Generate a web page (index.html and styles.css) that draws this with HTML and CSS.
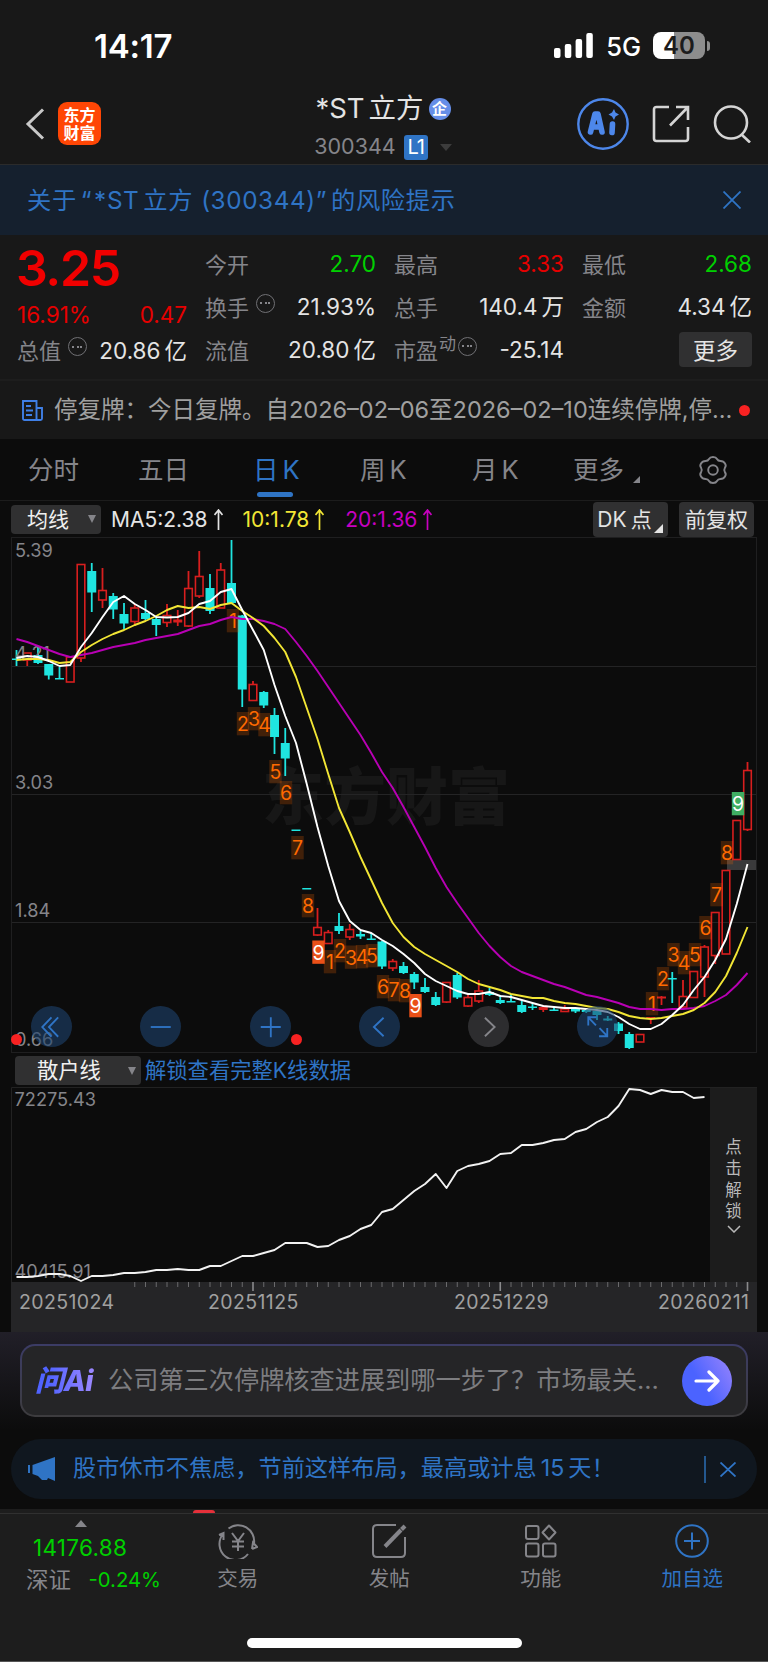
FILE: index.html
```html
<!DOCTYPE html>
<html lang="zh-CN">
<head>
    <meta charset="UTF-8">
    <meta name="viewport" content="width=device-width, initial-scale=1.0">
    <title>*ST立方 300344</title>
    <link rel="stylesheet" href="styles.css">
</head>
<body>

<div class="status-bar">
    <span class="time">14:17</span>
    <div class="status-right">
        <svg class="signal" width="39" height="26" viewBox="0 0 39 26" fill="#fff">
            <rect x="0" y="15" width="6.5" height="10" rx="2"/>
            <rect x="10.8" y="11" width="6.5" height="14" rx="2"/>
            <rect x="21.6" y="6" width="6.5" height="19" rx="2"/>
            <rect x="32.3" y="0" width="6.5" height="25" rx="2"/>
        </svg>
        <span class="network">5G</span>
        <div class="battery">40</div>
        <div class="battery-tip"></div>
    </div>
</div>

<header>
    <div class="header-left">
        <svg width="20" height="32" viewBox="0 0 20 32" fill="none" stroke="#c8c8c8" stroke-width="3"><path d="M18 1.5 3 16l15 14.5"/></svg>
        <div class="app-logo"><span>东方</span><span>财富</span></div>
    </div>
    <div class="stock-title">
        <div class="stock-name"><span>*ST<i></i>立方</span><b>企</b></div>
        <div class="stock-code"><span>300344</span><b>L1</b><i class="arrow"></i></div>
    </div>
    <div class="header-right">
        <svg width="52" height="52" viewBox="0 0 52 52">
            <circle cx="26" cy="26" r="24.7" fill="none" stroke="#4d87ea" stroke-width="2.4"/>
            <g stroke="#4d87ea" stroke-width="5.6" fill="none" stroke-linecap="round" stroke-linejoin="round">
                <path d="M13.500 34 18 16h3l4 18M17 29h6"/>
                <path d="M35.500 26l-.5 8.500"/>
            </g>
            <path d="M37 11l1.500 3.500 3.500 2-3.500 2-1.500 3.500-2-3.500-3.500-2 3.500-2z" fill="#4d87ea"/>
        </svg>
        <svg width="38" height="38" viewBox="0 0 38 38" fill="none" stroke="#d4d4d4" stroke-width="2.6">
            <path d="M17 2H4.500Q2 2 2 4.500v29Q2 36 4.500 36h29q2.500 0 2.500-2.500V22M24 2h12v13M36 2 18 20.500"/>
        </svg>
        <svg width="38" height="38" viewBox="0 0 38 38" fill="none" stroke="#d4d4d4" stroke-width="2.6">
            <circle cx="18" cy="17.500" r="16"/><path d="M28.500 29.500 37 37.500"/>
        </svg>
    </div>
</header>

<div class="risk-bar">
    <span>关于<em>“</em>*ST<i></i>立方<i></i><i></i>(300344)<em class="end">”</em><i></i>的风险提示</span>
    <svg width="18" height="18" viewBox="0 0 18 18" stroke="#2f74c5" stroke-width="1.8"><path d="M.5.5l17 17M17.500.5l-17 17"/></svg>
</div>

<section class="quote">
    <div class="quote-main">
        <div class="price">3.25</div>
        <div class="change"><span>16.91%</span><span>0.47</span></div>
        <div class="item total"><label>总值<u></u></label><span>20.86<i></i>亿</span></div>
    </div>
    <div class="quote-grid">
        <div class="item"><label>今开</label><span class="green">2.70</span></div>
        <div class="item"><label>最高</label><span class="red">3.33</span></div>
        <div class="item"><label>最低</label><span class="green">2.68</span></div>
        <div class="item"><label>换手<u></u></label><span>21.93%</span></div>
        <div class="item"><label>总手</label><span>140.4<i></i>万</span></div>
        <div class="item"><label>金额</label><span>4.34<i></i>亿</span></div>
        <div class="item"><label>流值</label><span>20.80<i></i>亿</span></div>
        <div class="item"><label>市盈<sup>动</sup><u class="tight"></u></label><span>-25.14</span></div>
        <div class="item item-more"><button class="more-button">更多</button></div>
    </div>
</section>

<div class="notice">
    <svg width="21" height="21" viewBox="0 0 21 21" fill="none" stroke="#3f7fe6" stroke-width="1.900">
        <path d="M1 1h13.500v19H2.500Q1 20 1 18.500zM14.500 8H20v10.500Q20 20 18.500 20h-4M4 6h5M4 10.500h7M4 15h6"/>
    </svg>
    <span class="notice-text">停复牌：今日复牌。自2026–02–06至2026–02–10连续停牌,停…</span>
    <i class="dot"></i>
</div>

<nav class="period-tabs">
    <a class="p1">分时</a>
    <a class="p2">五日</a>
    <a class="p3 active">日<i></i>K</a>
    <a class="p4">周<i></i>K</a>
    <a class="p5">月<i></i>K</a>
    <a class="p6">更多<b class="corner"></b></a>
    <svg width="30" height="28" viewBox="0 0 30 28" fill="none" stroke="#85858a" stroke-width="1.900" stroke-linejoin="round">
        <path d="M11 3Q12 1 15 1t4 2q1 2 3.500 2 3 0 4.500 2.500 1.500 2.500 0 4-1.500 2.500 0 5 1.500 1.500 0 4Q25.500 23 22.500 23 20 23 19 25q-1 2-4 2t-4-2Q10 23 7.500 23 4.500 23 3 20.500q-1.500-2.500 0-4 1.500-2.500 0-5-1.500-1.500 0-4Q4.500 5 7.500 5 10 5 11 3z"/>
        <circle cx="15" cy="14" r="4.800"/>
    </svg>
</nav>

<div class="ma-row">
    <div class="select ma-select">均线<i class="arrow"></i></div>
    <span class="ma ma5">MA5:2.38<svg width="9" height="21" viewBox="0 0 9 21"><path d="M4.500 21V1M.5 6l4-5 4 5"/></svg></span>
    <span class="ma ma10">10:1.78<svg width="9" height="21" viewBox="0 0 9 21"><path d="M4.500 21V1M.5 6l4-5 4 5"/></svg></span>
    <span class="ma ma20">20:1.36<svg width="9" height="21" viewBox="0 0 9 21"><path d="M4.500 21V1M.5 6l4-5 4 5"/></svg></span>
    <div class="chip dk">DK<i></i>点<b class="corner"></b></div>
    <div class="chip">前复权</div>
</div>

<div class="kline">
    <svg id="kline" width="768" height="518" viewBox="0 536 768 518"></svg>
    <div class="chart-buttons">
        <button><svg viewBox="0 0 40 40"><path d="M20 11 11 20.500 20 30M26.500 11l-9 9.500 9 9.500"/></svg></button>
        <button><svg viewBox="0 0 40 40"><path d="M10.500 20.500h19.500"/></svg></button>
        <button><svg viewBox="0 0 40 40"><path d="M10.500 20.500h19.500M20.300 11v19.500"/></svg></button>
        <button><svg viewBox="0 0 40 40"><path d="M24 11.500 14.500 20.500 24 29.500"/></svg></button>
        <button class="disabled"><svg viewBox="0 0 40 40"><path d="M16.500 11.500 26 20.500 16.500 29.500"/></svg></button>
        <button><svg viewBox="0 0 40 40"><path d="M11 19v-8h8M11 11l7.500 8M29.500 21.500v8h-8M29.500 29.500l-7.500-8"/></svg></button>
    </div>
    <i class="dot dot-left"></i>
    <i class="dot dot-plus"></i>
</div>

<div class="sub-row">
    <div class="select sub-select">散户线<i class="arrow"></i></div>
    <a>解锁查看完整K线数据</a>
</div>

<div class="retail">
    <svg id="retail" width="699" height="195" viewBox="11 1087 699 195"></svg>
    <div class="unlock">
        <span>点</span><span>击</span><span>解</span><span>锁</span>
        <svg width="14" height="8" viewBox="0 0 14 8" fill="none" stroke="#b8b8b8" stroke-width="1.500"><path d="M1 1l6 6 6-6"/></svg>
    </div>
</div>

<div class="axis">
    <svg id="ticks" width="746" height="10" viewBox="11 1282 746 10"></svg>
    <div class="dates">
        <span>20251024</span><span>20251125</span><span>20251229</span><span>20260211</span>
    </div>
</div>

<div class="ask-area">
    <div class="ask-box">
        <span class="ask-logo">问Ai</span>
        <span class="ask-text">公司第三次停牌核查进展到哪一步了？市场最关…</span>
        <div class="ask-send">
            <svg width="26" height="22" viewBox="0 0 26 22" fill="none" stroke="#fff" stroke-width="3.200" stroke-linecap="round" stroke-linejoin="round"><path d="M2 11h22M15 2l9 9-9 9"/></svg>
        </div>
    </div>
</div>

<div class="promo">
    <svg width="28" height="24" viewBox="0 0 28 24" fill="#2f74c5"><path d="M0 8h2v8H0zM4.500 8 27 0v24l-7-3-1 2h-5l-4-4-5.500-2z"/></svg>
    <span>股市休市不焦虑，节前这样布局，最高或计息<i></i>15<i></i>天！</span>
    <em></em>
    <svg class="close" width="16" height="15" viewBox="0 0 16 15" stroke="#2f74c5" stroke-width="1.800"><path d="M.5.500l15 14M15.500.500l-15 14"/></svg>
</div>

<footer>
    <div class="badge-edge"></div>
    <div class="index-box">
        <i class="up"></i>
        <div class="index-value">14176.88</div>
        <div class="index-name"><span>深证</span><b>-0.24%</b></div>
    </div>
    <div class="tools">
        <a>
            <svg width="40" height="36" viewBox="0 0 40 36" fill="none" stroke="#85858a" stroke-width="2">
                <path d="M10.500 5.500A16 16 0 0 1 36 20.500M30 31A16 16 0 0 1 5 11M1 12l4.500-2v7M34 26l1-6.500 4 4.500-5 2M14 10l6 8 6-8M20 18v10M14 18.500h12M14 23.500h12"/>
            </svg>
            <span>交易</span>
        </a>
        <a>
            <svg width="36" height="36" viewBox="0 0 36 36" fill="none" stroke="#85858a" stroke-width="2">
                <path d="M25 2H6Q2 2 2 6v24q0 4 4 4h24q4 0 4-4V14"/>
                <path d="M14 23.500 30 7" stroke-width="4"/><path d="M30.500 6.500 34 3" stroke-width="4"/>
            </svg>
            <span>发帖</span>
        </a>
        <a>
            <svg width="36" height="36" viewBox="0 0 36 36" fill="none" stroke="#85858a" stroke-width="2">
                <rect x="3" y="3" width="12.500" height="13" rx="2"/><rect x="3" y="20.500" width="12.500" height="13" rx="2"/><rect x="20" y="20.500" width="12.500" height="13" rx="2"/>
                <path d="M26 2.500l6.500 7-6.500 7-6.500-7z" stroke-linejoin="round"/>
            </svg>
            <span>功能</span>
        </a>
        <a class="add">
            <svg width="36" height="36" viewBox="0 0 36 36" fill="none" stroke="#2f74c5" stroke-width="2">
                <circle cx="18" cy="18" r="15.800"/><path d="M10 18h16M18 9.500v17"/>
            </svg>
            <span>加自选</span>
        </a>
    </div>
    <div class="home-indicator"></div>
</footer>

<script src="chart.js"></script>
</body>
</html>
```
FILE: styles.css
```css
* {
    margin: 0;
    padding: 0;
    box-sizing: border-box;
}

body {
    width: 768px;
    height: 1662px;
    overflow: hidden;
    font-family: Inter, "Noto Sans CJK SC", sans-serif;
    background-color: #0c0c0c;
    color: #e4e4e4;
    line-height: 1;
}

i, em {
    font-style: normal;
}

svg {
    display: block;
    flex: none;
}

button {
    border: none;
    font-family: inherit;
}

/* thin space between latin and chinese text */
span > i, a > i, .chip > i {
    display: inline-block;
    width: 4px;
}

.arrow {
    border: 6px solid transparent;
    border-top: 8px solid #85858a;
    border-bottom: none;
}

.corner {
    border-left: 9px solid transparent;
    border-bottom: 9px solid currentColor;
}

.dot {
    width: 11px;
    height: 11px;
    border-radius: 50%;
    background: #f82222;
}

.red {
    color: #e60000;
}

.green {
    color: #00d000;
}

/* status bar */
.status-bar {
    display: flex;
    justify-content: space-between;
    align-items: center;
    height: 91px;
    padding: 0 58px 0 94px;
    background: #181818;
    color: #fff;
}

.time {
    font-size: 33px;
    font-weight: 600;
    letter-spacing: -0.2px;
    padding-top: 2px;
}

.status-right {
    display: flex;
    align-items: center;
}

.network {
    font-size: 25.500px;
    font-weight: 500;
    margin: 3px 12px 0 13px;
}

.battery {
    width: 52px;
    height: 27px;
    border-radius: 8px;
    background: linear-gradient(90deg, #fff 40%, #8d8d8d 40%);
    color: #1c1c1c;
    font-size: 24px;
    font-weight: 600;
    line-height: 27px;
    text-align: center;
}

.battery-tip {
    width: 3px;
    height: 10px;
    margin-left: 2px;
    border-radius: 0 4px 4px 0;
    background: #8d8d8d;
}

/* header */
header {
    display: grid;
    grid-template-columns: 280px 208px 280px;
    height: 74px;
    background: #181818;
    border-bottom: 1px solid #2b2b2b;
}

.header-left {
    display: flex;
    align-items: center;
    padding-left: 25px;
    height: 65px;
}

.app-logo {
    display: flex;
    flex-direction: column;
    justify-content: center;
    align-items: center;
    width: 43px;
    height: 43px;
    margin-left: 13px;
    border-radius: 9px;
    background: #ff4605;
    color: #fff;
    font-size: 16px;
    font-weight: 700;
    line-height: 18px;
}

.stock-title {
    display: flex;
    flex-direction: column;
    align-items: center;
    padding-right: 2px;
}

.stock-name {
    display: flex;
    align-items: center;
    height: 36px;
    font-size: 27.500px;
}

.stock-name b {
    width: 22px;
    height: 22px;
    margin-left: 5px;
    border-radius: 50%;
    background: #668ee8;
    color: #fff;
    font-size: 15px;
    line-height: 22px;
    text-align: center;
}

.stock-code {
    display: flex;
    align-items: center;
    height: 24px;
    margin-top: 8px;
    color: #85858a;
    font-size: 21.500px;
}

.stock-code b {
    width: 24px;
    height: 25px;
    margin: 0 12px 0 8px;
    border-radius: 3px;
    background: #2f74c5;
    color: #fff;
    font-size: 20px;
    font-weight: 400;
    line-height: 25px;
    text-align: center;
    letter-spacing: -1px;
}

.stock-code .arrow {
    border-top: 7px solid #3c3c3c;
}

.header-right {
    display: flex;
    align-items: center;
    justify-content: flex-end;
    height: 66px;
    padding-right: 17px;
}

.header-right svg + svg {
    margin-left: 23px;
}

/* risk bar */
.risk-bar {
    display: flex;
    justify-content: space-between;
    align-items: center;
    height: 70px;
    padding: 0 27px 0 27px;
    background: #15202e;
    color: #2f74c5;
    font-size: 24.300px;
}

.risk-bar em {
    margin: 0 2px 0 4px;
}

.risk-bar .end {
    margin: 0;
}

.risk-bar span {
    letter-spacing: 0.6px;
}

/* quote */
.quote {
    display: flex;
    gap: 18px;
    height: 146px;
    padding: 0 16px 0 17px;
    background: #181818;
    border-bottom: 2px solid #1d1d1d;
}

.quote-main {
    width: 171px;
    padding-top: 3px;
}

.price {
    height: 60px;
    margin-left: -1px;
    color: #f00000;
    font-size: 50px;
    font-weight: 600;
    line-height: 60px;
    letter-spacing: -1.400px;
}

.change {
    display: flex;
    justify-content: space-between;
    height: 34px;
    color: #e60000;
    font-size: 22.500px;
    line-height: 33px;
}

.quote-grid {
    display: grid;
    grid-template-columns: 171px 170px 170px;
    grid-auto-rows: 43px;
    column-gap: 18px;
    padding-top: 8px;
}

.item {
    display: flex;
    justify-content: space-between;
    align-items: center;
    font-size: 22px;
    white-space: nowrap;
}

.item span {
    font-size: 22.500px;
}

.total {
    height: 38px;
}

.item label {
    display: flex;
    align-items: center;
    color: #85858a;
}

/* circled "..." hint */
.item u {
    width: 19px;
    height: 19px;
    margin: -9px 0 0 7px;
    border: 1.5px solid #707074;
    border-radius: 50%;
    background: radial-gradient(circle, #85858a 1px, transparent 1.500px) center / 4px 4px no-repeat,
        radial-gradient(circle, #85858a 1px, transparent 1.500px) 2px center / 4px 4px no-repeat,
        radial-gradient(circle, #85858a 1px, transparent 1.500px) 10px center / 4px 4px no-repeat;
}

.item u.tight {
    margin-left: 2px;
}

.item sup {
    font-size: 17px;
    margin: -13px 0 0 1px;
}

.more-button {
    width: 73px;
    height: 35px;
    border-radius: 4px;
    background: #303031;
    color: #e4e4e4;
    font-size: 22.5px;
}

.item-more {
    justify-content: flex-end;
    margin-top: -3px;
}

/* notice */
.notice {
    display: flex;
    align-items: center;
    height: 58px;
    padding: 0 18px 0 22px;
    background: #181818;
    color: #a0a0a0;
}

.notice-text {
    flex: 1;
    margin-left: 11px;
    font-size: 23.500px;
    white-space: nowrap;
}

/* period tabs */
.period-tabs {
    display: flex;
    align-items: center;
    height: 62px;
    padding: 1px 0 0 28px;
    border-bottom: 1px solid #1c1c1c;
    color: #85858a;
    font-size: 25.500px;
}

.period-tabs a {
    position: relative;
    width: 110px;
    white-space: nowrap;
}

.period-tabs .p3 {
    width: 107px;
    padding-left: 5px;
}

.period-tabs .p4 {
    padding-left: 5px;
    width: 112px;
}

.period-tabs .p5 {
    padding-left: 5px;
    width: 106px;
}

.period-tabs .p6 {
    width: 125px;
}

.period-tabs .active {
    color: #2f74c5;
}

.period-tabs .active::after {
    content: "";
    position: absolute;
    left: 9px;
    bottom: -14px;
    width: 36px;
    height: 5px;
    border-radius: 3px;
    background: #2f74c5;
}

.period-tabs .corner {
    display: inline-block;
    margin-left: 9px;
    border-left-width: 7px;
    border-bottom-width: 7px;
    vertical-align: -4px;
}

/* moving averages */
.ma-row {
    display: flex;
    align-items: center;
    height: 35px;
    padding: 1px 14px 0 11px;
    font-size: 21px;
}

.select {
    display: flex;
    align-items: center;
    justify-content: space-between;
    height: 29px;
    border-radius: 4px;
    background: #303031;
    color: #f0f0f0;
}

.select .arrow {
    border-width: 8px 4.500px 0;
}

.ma-select {
    width: 90px;
    padding: 0 5px 0 16px;
}

.ma {
    display: flex;
    align-items: center;
}

.ma svg {
    margin-left: 6px;
    fill: none;
    stroke: currentColor;
    stroke-width: 1.700;
}

.ma5 {
    margin-left: 10px;
}

.ma10 {
    margin-left: 20px;
    color: #f2e635;
}

.ma20 {
    margin-left: 21px;
    margin-right: auto;
    color: #c800c0;
}

.chip {
    position: relative;
    width: 75px;
    height: 35px;
    margin-left: 11px;
    border-radius: 4px;
    background: #303031;
    line-height: 35px;
    text-align: center;
    white-space: nowrap;
}

.dk {
    padding-right: 12px;
}

.dk .corner {
    position: absolute;
    right: 5px;
    bottom: 4px;
}

/* k line chart */
.kline {
    position: relative;
    height: 518px;
}

.chart-buttons {
    position: absolute;
    left: 31px;
    top: 470px;
    display: flex;
    gap: 68.300px;
}

.chart-buttons button {
    width: 41px;
    height: 41px;
    border-radius: 50%;
    background: rgba(30, 66, 110, 0.6);
}

.chart-buttons svg {
    width: 41px;
    height: 41px;
    fill: none;
    stroke: #2f74c5;
    stroke-width: 1.800;
}

.chart-buttons .disabled {
    background: rgba(54, 54, 56, 0.8);
}

.chart-buttons .disabled svg {
    stroke: #85858a;
}

.dot-left {
    position: absolute;
    left: 11px;
    top: 498px;
}

.dot-plus {
    position: absolute;
    left: 291px;
    top: 498px;
}

.axis-label {
    fill: #85858a;
    font-size: 18.200px;
}

.watermark {
    fill: #171717;
    font-size: 62px;
    font-weight: 900;
}

.tag {
    fill: #ff6a00;
    font-size: 19.500px;
    text-anchor: middle;
}

.tag-solid {
    fill: #fff;
}

/* retail line */
.sub-row {
    display: flex;
    align-items: center;
    height: 33px;
    padding-left: 15px;
    font-size: 21.300px;
}

.sub-select {
    width: 126px;
    padding: 0 5px 0 22px;
}

.sub-row a {
    margin-left: 4px;
    color: #2f74c5;
}

.retail {
    display: flex;
    height: 195px;
    margin: 0 11px;
}

.unlock {
    display: flex;
    flex-direction: column;
    align-items: center;
    width: 47px;
    padding-top: 49px;
    border-top: 1px solid #222;
    background: #1c1c1c;
    color: #b8b8b8;
    font-size: 16.500px;
    line-height: 21.400px;
}

.unlock svg {
    margin-top: 2px;
}

/* date axis */
.axis {
    height: 50px;
    margin: 0 11px;
    background: #252527;
}

.dates {
    display: flex;
    padding: 1px 0 0 8px;
    color: #a0a0a0;
    font-size: 19.500px;
    letter-spacing: 0.400px;
}

.dates span {
    width: 189px;
}

.dates span:nth-child(2) {
    width: 246px;
}

.dates span:nth-child(3) {
    width: 204px;
}

.dates span:last-child {
    width: auto;
}

/* ask ai */
.ask-area {
    height: 107px;
    padding: 12px 20px 0;
    background: linear-gradient(#211f28, #0c0c0c 92%);
}

.ask-box {
    display: flex;
    align-items: center;
    height: 73px;
    padding: 0 14px 0 13px;
    border: 2px solid transparent;
    border-radius: 15px;
    background: linear-gradient(#252527, #252527) padding-box, linear-gradient(#3c3c66, #3d3c3e) border-box;
}

.ask-logo {
    width: 64px;
    background: linear-gradient(90deg, #5063ff 20%, #a58cff);
    -webkit-background-clip: text;
    background-clip: text;
    color: transparent;
    font-size: 29px;
    font-style: italic;
    font-weight: 800;
    line-height: 36px;
    white-space: nowrap;
    letter-spacing: -0.5px;
}

.ask-text {
    flex: 1;
    margin-left: 9px;
    color: #7d7d80;
    font-size: 25.200px;
    white-space: nowrap;
}

.ask-send {
    display: flex;
    align-items: center;
    justify-content: center;
    width: 50px;
    height: 50px;
    border-radius: 50%;
    background: linear-gradient(60deg, #4b63ff 40%, #9a85fc);
}

/* promo */
.promo {
    display: flex;
    align-items: center;
    height: 60px;
    margin: 0 11px;
    padding: 0 21px 0 17px;
    border-radius: 30px;
    background: #10171f;
    color: #2f74c5;
    font-size: 23.200px;
}

.promo span {
    flex: 1;
    margin-left: 17px;
    white-space: nowrap;
}

.promo em {
    width: 2px;
    height: 27px;
    margin-right: 14px;
    background: #24588f;
}

/* bottom bar */
footer {
    position: relative;
    display: flex;
    height: 153px;
    margin-top: 10px;
    background: #1d1d1d;
    border-bottom: 1px solid #555;
}

footer::before {
    content: "";
    position: absolute;
    top: 4px;
    width: 100%;
    height: 1px;
    background: #303030;
}

.badge-edge {
    position: absolute;
    left: 193px;
    top: 1px;
    width: 22px;
    height: 3px;
    border-radius: 8px 8px 0 0;
    background: #e5303a;
}

.index-box {
    width: 162px;
    height: 90px;
    padding-top: 11px;
}

.up {
    display: block;
    width: 12px;
    margin-left: 75px;
    border: 6px solid transparent;
    border-bottom: 7px solid #85858a;
    border-top: none;
}

.index-value {
    margin-top: 10px;
    padding-left: 33px;
    color: #00d000;
    font-size: 22.500px;
    letter-spacing: 0.300px;
}

.index-name {
    display: flex;
    justify-content: space-between;
    margin-top: 9px;
    padding: 0 1px 0 26px;
    color: #85858a;
    font-size: 22.500px;
}

.index-name b {
    color: #00d000;
    font-size: 20.300px;
    font-weight: 400;
    line-height: 22px;
}

.tools {
    display: flex;
}

.tools a {
    display: flex;
    flex-direction: column;
    align-items: center;
    width: 151.500px;
    padding-top: 14px;
    color: #85858a;
    font-size: 20.500px;
}

.tools span {
    margin-top: 10px;
}

.tools .add {
    color: #2f74c5;
}

.home-indicator {
    position: absolute;
    left: 247px;
    bottom: 13px;
    width: 275px;
    height: 10px;
    border-radius: 5px;
    background: #fff;
}
```
FILE: chart.js
```javascript
const START = 16.5;
const STEP = 10.75;
const RED = '#d81e1e';
const CYAN = '#1fe5e0';
const x = i => START + i * STEP;

// [color, body top, body bottom, wick top, wick bottom], r = hollow, R = filled
const candles = [
    ['c', 658.5, 660, 650, 666], ['r', 653, 660, 653, 666], ['c', 655, 663, 647, 664], ['c', 664, 675.5, 664, 679.5],
    ['c', 678, 679.5, 667, 679], ['r', 657, 682, 657, 682], ['r', 564.5, 658, 564.5, 662], ['c', 571, 592.5, 563, 612],
    ['r', 590.5, 600, 568, 608], ['c', 596, 609.5, 593, 619], ['c', 614, 623.5, 603, 629], ['r', 608, 621.5, 604, 626],
    ['c', 613, 619, 600, 620], ['c', 619, 625, 617, 636], ['r', 615.5, 622.5, 604, 627], ['R', 619.5, 622.5, 610, 626],
    ['r', 588.5, 626, 571, 627], ['r', 576.5, 596, 551, 598], ['c', 588, 611, 574, 614], ['r', 570, 608, 563, 608],
    ['c', 583, 603, 540, 603], ['c', 615.5, 689.5, 615, 707], ['r', 684.5, 700.5, 681, 701], ['c', 692, 705.5, 691, 708],
    ['c', 715, 737, 708, 754], ['c', 743, 758.5, 728, 776], ['c', 829.5, 831, 830, 831], ['c', 888, 889.5, 888, 889],
    ['r', 927.5, 935, 908, 936], ['r', 932.5, 943.5, 930, 944], ['c', 926, 931, 913, 934], ['r', 929.5, 937, 924, 940],
    ['c', 934, 936.5, 931, 939], ['c', 938.5, 940, 933, 940], ['c', 941.5, 966.5, 941, 969], ['r', 961.5, 968, 959, 971],
    ['c', 966, 973, 962, 974], ['c', 974, 982.5, 972, 989], ['c', 987, 992, 978, 993], ['c', 997, 1005, 992, 1006],
    ['r', 982.5, 1002, 982, 1003], ['c', 975, 997.5, 973, 999], ['r', 997.5, 1006, 994, 1007], ['r', 991, 1001, 980, 1003],
    ['c', 992, 995, 988, 996], ['c', 1000, 1003, 995, 1004], ['c', 1001, 1002.5, 994, 1002], ['c', 1005, 1012, 1001, 1013],
    ['c', 1006.5, 1008, 1003, 1010], ['R', 1007, 1010, 1005, 1012], ['c', 1009.5, 1011, 1007, 1011], ['r', 1009, 1011.5, 1005, 1012],
    ['c', 1009, 1011.5, 1008, 1013], ['c', 1010, 1012, 1009, 1013], ['c', 1011, 1015, 1011, 1020], ['c', 1018.5, 1020.5, 1016, 1021],
    ['c', 1023.5, 1031, 1022, 1034], ['c', 1034, 1048, 1032, 1049], ['r', 1034.5, 1042, 1034, 1042], ['R', 1017, 1019, 1017, 1024],
    ['R', 996.5, 998.5, 996, 1005], ['c', 978, 979.5, 972, 1003], ['r', 996.5, 1007, 980, 1007], ['r', 971.5, 997.5, 971, 998],
    ['r', 947, 977, 945, 997], ['r', 912.5, 955.5, 912, 964], ['r', 870.5, 954, 870, 954], ['r', 820.5, 859.5, 820, 860],
    ['r', 770.5, 829.5, 762, 831]
];

const ma5 = [658, 656, 657, 661, 666, 665, 647, 633, 617, 602, 596, 604, 610, 617, 617.5, 617, 613, 604, 601, 592, 589, 610, 630, 650, 685, 716, 743, 784, 827, 866, 901, 921, 930, 933, 940, 946, 954, 963, 974, 981, 986, 991, 994, 994, 992, 996, 997, 1000, 1003, 1006, 1007, 1008, 1008, 1009, 1010, 1012, 1017, 1024, 1029, 1029, 1024, 1015, 1005, 990, 977, 960, 939, 904, 864];
const ma10 = [660, 659, 659, 660, 663, 662, 652, 645, 639, 634, 630, 625, 621, 616, 610, 606, 608, 607, 609, 605, 603, 611, 618, 626, 638, 652, 677, 708, 739, 774, 808, 832, 857, 880, 903, 923, 937, 947, 954, 960, 966, 972, 979, 984, 987, 990, 994, 996, 998, 998, 1001, 1003, 1004, 1006, 1008, 1009, 1012, 1016, 1018, 1019, 1018, 1016, 1014, 1010, 1003, 992, 976, 953, 927];
const ma20 = [639, 642, 646, 650, 654, 657, 655, 653, 650, 647, 645, 643, 640, 638, 636, 634, 630, 626, 624, 620, 617, 619, 619, 621, 624, 629, 642, 656, 671, 687, 703, 719, 735, 753, 772, 788, 807, 827, 847, 868, 887, 903, 918, 933, 946, 957, 966, 972, 976, 980, 984, 987, 991, 995, 997, 1000, 1003, 1007, 1009, 1009, 1010, 1009, 1009, 1008, 1006, 1001, 995, 985, 973];
const retail = [1277, 1277, 1276, 1274, 1274, 1276, 1281, 1276, 1276, 1275, 1273, 1273, 1272, 1270, 1270, 1269, 1270, 1270, 1266, 1266, 1261, 1256, 1256, 1253, 1250, 1243, 1243, 1243, 1247, 1246, 1240, 1236, 1229, 1225, 1212, 1209, 1200, 1191, 1184, 1174, 1188, 1171, 1166, 1164, 1161, 1154, 1153, 1145, 1145, 1143, 1140, 1139, 1132, 1129, 1122, 1117, 1106, 1089, 1090, 1094, 1090, 1092, 1092, 1098, 1097];

// [digit, center x, top, fill]
const tags = [
    [1, 233, 609], [2, 243, 712], [3, 254, 707], [4, 264.5, 713], [5, 275.5, 760], [6, 286, 781], [7, 297.5, 836], [8, 308, 894],
    [9, 318.5, 940.5, '#ea5018'], [1, 330, 950], [2, 340, 939], [3, 351, 945.5], [4, 362, 945], [5, 372, 944],
    [6, 383, 975], [7, 394, 978], [8, 405, 979], [9, 415.5, 994, '#ea5018'],
    [1, 652, 992], [2, 663, 967], [3, 673.5, 943], [4, 684, 951], [5, 695, 943], [6, 705.5, 916], [7, 716.5, 883], [8, 727, 841],
    [9, 738, 792, '#3fae62']
];

const polyline = (values, color) =>
    `<polyline points="${values.map((y, i) => x(i) + ',' + y).join(' ')}" fill="none" stroke="${color}" stroke-width="1.9" stroke-linejoin="round"/>`;

function drawKline() {
    let out = '<text class="watermark" x="262" y="820">东方财富</text>';
    out += '<rect x="11.5" y="537.5" width="745" height="515" fill="none" stroke="#1f1f20"/>';
    [666, 794, 922].forEach(y => {
        out += `<path d="M12 ${y + 0.5}H756" stroke="#242425"/>`;
    });
    out += '<rect x="727" y="860" width="29" height="10" fill="#3a3a3b"/>';

    candles.forEach(([type, top, bottom, high, low], i) => {
        const color = type === 'c' ? CYAN : RED;
        if (type === 'r') {
            out += `<path d="M${x(i)} ${high}V${top}M${x(i)} ${bottom}V${low}" stroke="${color}" stroke-width="1.8"/>`;
            out += `<rect x="${x(i) - 3.8}" y="${top}" width="7.6" height="${bottom - top}" fill="none" stroke="${color}" stroke-width="1.6"/>`;
        } else {
            out += `<path d="M${x(i)} ${high}V${low}" stroke="${color}" stroke-width="1.8"/>`;
            out += `<rect x="${x(i) - 4.5}" y="${top}" width="9" height="${bottom - top}" fill="${color}"/>`;
        }
    });

    [['5.39', 557], ['4.21', 660], ['3.03', 788.5], ['1.84', 917], ['0.66', 1046]].forEach(([text, y]) => {
        out += `<text class="axis-label" x="15" y="${y}">${text}</text>`;
    });

    tags.forEach(([digit, cx, top, fill]) => {
        out += `<rect x="${cx - 6.2}" y="${top}" width="12.4" height="23.3" fill="${fill || 'rgba(255, 106, 0, 0.22)'}"/>`;
        out += `<text class="tag${fill ? ' tag-solid' : ''}" x="${cx}" y="${top + 19}">${digit}</text>`;
    });

    out += polyline(ma20, '#b800b4') + polyline(ma10, '#f2e635') + polyline(ma5, '#fff');
    document.getElementById('kline').innerHTML = out;
}

function drawRetail() {
    document.getElementById('retail').innerHTML =
        '<path d="M11.500 1282V1087.500H711" fill="none" stroke="#222"/>' +
        '<text class="axis-label" x="14.500" y="1106">72275.43</text>' +
        '<text class="axis-label" x="14.500" y="1278">40415.91</text>' +
        polyline(retail, '#f2f2f2');
}

function drawTicks() {
    let out = '';
    for (let i = 11; i < 69; i++) {
        const major = i === 22 || i === 45 || i === 68;
        out += `<path d="M${x(i)} 1282v${major ? 9 : 5}" stroke="${major ? '#8a8a8c' : '#6a6a6c'}" stroke-width="${major ? 1.6 : 1}"/>`;
    }
    document.getElementById('ticks').innerHTML = out;
}

drawKline();
drawRetail();
drawTicks();
```
